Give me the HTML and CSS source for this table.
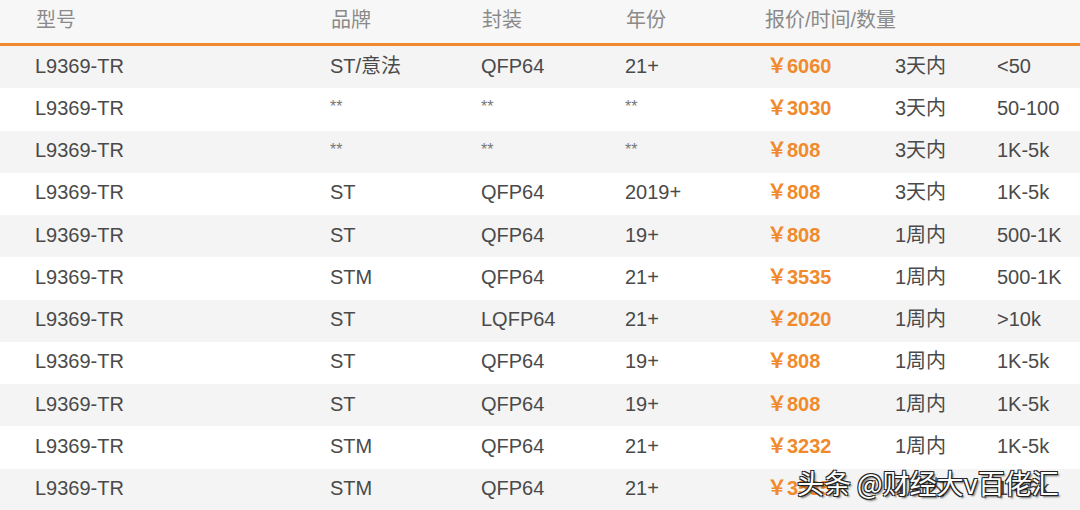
FILE: index.html
```html
<!DOCTYPE html>
<html lang="zh">
<head>
<meta charset="utf-8">
<link rel="stylesheet" href="styles.css">
</head>
<body>
<div class="table">
  <div class="row head">
    <div>型号</div><div>品牌</div><div>封装</div><div>年份</div><div class="span3">报价/时间/数量</div>
  </div>
  <div class="row odd"><div>L9369-TR</div><div>ST/意法</div><div>QFP64</div><div>21+</div><div class="price">￥6060</div><div>3天内</div><div>&lt;50</div></div>
  <div class="row"><div>L9369-TR</div><div class="star">**</div><div class="star">**</div><div class="star">**</div><div class="price">￥3030</div><div>3天内</div><div>50-100</div></div>
  <div class="row odd"><div>L9369-TR</div><div class="star">**</div><div class="star">**</div><div class="star">**</div><div class="price">￥808</div><div>3天内</div><div>1K-5k</div></div>
  <div class="row"><div>L9369-TR</div><div>ST</div><div>QFP64</div><div>2019+</div><div class="price">￥808</div><div>3天内</div><div>1K-5k</div></div>
  <div class="row odd"><div>L9369-TR</div><div>ST</div><div>QFP64</div><div>19+</div><div class="price">￥808</div><div>1周内</div><div>500-1K</div></div>
  <div class="row"><div>L9369-TR</div><div>STM</div><div>QFP64</div><div>21+</div><div class="price">￥3535</div><div>1周内</div><div>500-1K</div></div>
  <div class="row odd"><div>L9369-TR</div><div>ST</div><div>LQFP64</div><div>21+</div><div class="price">￥2020</div><div>1周内</div><div>&gt;10k</div></div>
  <div class="row"><div>L9369-TR</div><div>ST</div><div>QFP64</div><div>19+</div><div class="price">￥808</div><div>1周内</div><div>1K-5k</div></div>
  <div class="row odd"><div>L9369-TR</div><div>ST</div><div>QFP64</div><div>19+</div><div class="price">￥808</div><div>1周内</div><div>1K-5k</div></div>
  <div class="row"><div>L9369-TR</div><div>STM</div><div>QFP64</div><div>21+</div><div class="price">￥3232</div><div>1周内</div><div>1K-5k</div></div>
  <div class="row odd"><div>L9369-TR</div><div>STM</div><div>QFP64</div><div>21+</div><div class="price">￥3535</div><div>1周内</div><div>1K-5k</div></div>
</div>
<div class="watermark">头条 @财经大v百佬汇</div>
</body>
</html>
```
FILE: styles.css
```css
html, body {
  margin: 0;
  padding: 0;
  background: #fff;
  width: 1080px;
  height: 510px;
  overflow: hidden;
}
body {
  position: relative;
  font-family: "Liberation Sans", Arial, "Noto Sans CJK SC", sans-serif;
  font-size: 20px;
  color: #4a4a4a;
}
.table {
  display: flex;
  flex-direction: column;
}
.row {
  display: grid;
  grid-template-columns: 295px 151px 144px 142px 128px 102px 1fr;
  align-items: center;
  height: 42.25px;
  box-sizing: border-box;
  padding-left: 35px;
  padding-bottom: 3px;
}
.row > div {
  line-height: 22px;
  height: 22px;
}
.row.odd {
  background: #f4f4f4;
}
.row.head {
  height: 46px;
  background: #f7f7f7;
  color: #8a8a8a;
  border-bottom: 3px solid #f08a2c;
  padding-left: 36px;
  padding-bottom: 4px;
}
.row.head .span3 {
  grid-column: span 3;
  margin-left: -3px;
}
.star {
  color: #777;
  font-size: 16px;
}
.row > .star {
  align-self: start;
  margin-top: 8px;
}
.price {
  color: #f08a2c;
  font-weight: bold;
}
.watermark {
  position: absolute;
  left: 797px;
  top: 465px;
  font-family: "Noto Sans CJK SC", sans-serif;
  font-size: 27px;
  line-height: 36px;
  color: #fff;
  text-shadow: 1px 1px 0 #222, -1px -1px 0 #222, 1px -1px 0 #222, -1px 1px 0 #222, 2px 2px 2px rgba(0,0,0,0.6);
}
```
